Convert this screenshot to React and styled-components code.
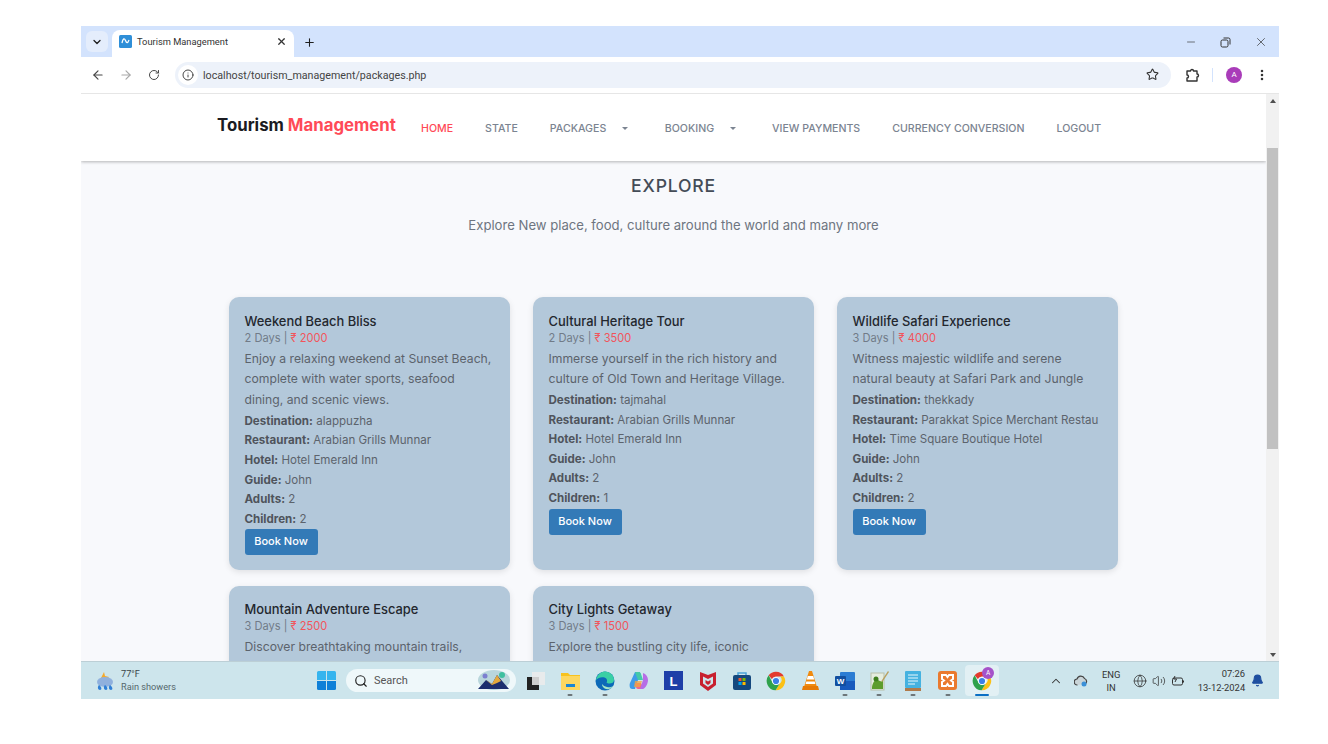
import React from "react";
import styled, { createGlobalStyle } from "styled-components";
import { ArrowLeft, ArrowRight, RotateCw, Info, Star, EllipsisVertical, ChevronDown, X, Plus, Minus, Search, ChevronUp, Globe, Volume2, Bell } from "lucide-react";

const Global = createGlobalStyle`
  html, body { margin: 0; padding: 0; background: #fff; overflow: hidden; }
  * { box-sizing: border-box; }
`;
const Stage = styled.div`
  width: 1328px; height: 744px; padding: 26px 49px 45px 81px; background: #fff;
  font-family: Roboto, "Liberation Sans", sans-serif;
`;
const Win = styled.div`
  width: 1198px; height: 673px; display: flex; flex-direction: column; overflow: hidden;
`;
const TabStrip = styled.div`
  height: 31px; flex: none; background: #d3e3fd; display: flex; align-items: flex-end; padding-left: 5px; color: #1f1f1f;
`;
const TabSearch = styled.div`
  width: 22px; height: 21px; margin: 0 4px 5px 0; border-radius: 6px; background: #e4edfc;
  display: flex; align-items: center; justify-content: center;
`;
const Tab = styled.div`
  width: 182px; height: 27px; background: #fff; border-radius: 8px 8px 0 0;
  display: flex; align-items: center; padding: 0 7px 4px; font-size: 9.3px; color: #333;
`;
const Favicon = styled.svg`width: 13px; height: 13px; margin-right: 5px; flex: none;`;
const TabTitle = styled.span`flex: 1;`;
const NewTab = styled.div`margin: 0 0 8px 9px; display: flex;`;
const WinControls = styled.div`
  margin: 0 11px 8px auto; display: flex; gap: 23px; align-items: center; color: #333;
`;
const Toolbar = styled.div`
  height: 37px; flex: none; background: #fff; display: flex; align-items: center; padding: 0 0 1px 3px;
  border-bottom: 1px solid #e6e6e6; color: #474747;
`;
const NavBtn = styled.div`
  width: 28px; display: flex; justify-content: center; color: ${p => p.$dim ? "#a8a8a8" : "#474747"};
`;
const Omnibox = styled.div`
  width: 996px; height: 26px; margin-left: 7px; border-radius: 13px; background: #edf2fa; display: flex; align-items: center;
  padding: 0 12px 0 3px; font-size: 10.7px; color: #1f1f1f;
`;
const InfoWrap = styled.div`
  width: 20px; height: 20px; border-radius: 50%; background: #fff; display: flex; align-items: center; justify-content: center; margin-right: 5px;
`;
const Url = styled.span`flex: 1; color: #444; padding-top: 1px;`;
const ToolRight = styled.div`display: flex; align-items: center; margin-left: 15px; color: #333;`;
const Divider = styled.div`width: 1px; height: 14px; background: #d3e3fd; margin: 0 13px 0 12px;`;
const Avatar = styled.div`
  width: 16px; height: 16px; border-radius: 50%; background: #a93cb9; color: #fff; font-size: 8px; display: flex; align-items: center; justify-content: center; margin-right: 13px;
`;
const Viewport = styled.div`flex: 1; min-height: 0; display: flex;`;
const Page = styled.div`
  width: 1185px; overflow: hidden; background: #f8f9fc;
  font-family: Inter, "Liberation Sans", sans-serif;
`;
const Scrollbar = styled.div`
  width: 13px; background: #f1f1f1; display: flex; flex-direction: column; align-items: center;
`;
const Arrow = styled.div`
  width: 0; height: 0; border-left: 3.5px solid transparent; border-right: 3.5px solid transparent;
  ${p => p.$up ? "border-bottom: 4px solid #505050; margin-top: 5px;" : "border-top: 4px solid #505050; margin-top: 204px;"}
`;
const Thumb = styled.div`width: 11px; height: 301px; background: #c1c1c1; margin-top: 45px;`;
const NavBar = styled.nav`
  height: 67px; background: #fff; box-shadow: 0 1px 3px rgba(0,0,0,.28); display: flex; align-items: center; padding-left: 136px; position: relative;
`;
const Logo = styled.div`
  width: 204px; font-size: 16.8px; font-weight: 700; color: #1b1b22; margin-top: -6px; white-space: nowrap;
  span { color: #ff4a57; }
`;
const NavLinks = styled.div`display: flex; align-items: center; gap: 32px; margin-top: 1px;`;
const NavLink = styled.a`
  font-size: 10.6px; font-weight: 500; color: ${p => p.$active ? "#ff4a57" : "#7b8491"}; white-space: nowrap; display: flex; align-items: center;
`;
const Caret = styled.i`
  display: inline-block; margin: 0 4.5px 0 ${p => p.$ml}px; width: 0; height: 0;
  border-left: 3px solid transparent; border-right: 3px solid transparent; border-top: 3px solid #7b8491;
`;
const Hero = styled.header`
  text-align: center; padding-top: 14px; height: 136px;
`;
const H1 = styled.h1`
  margin: 0; font-size: 17.6px; font-weight: 500; letter-spacing: 0.8px; color: #444c57; line-height: 22px;
`;
const Sub = styled.p`
  margin: 18px 0 0; font-size: 13.12px; color: #6e7580; line-height: 20px;
`;
const Grid = styled.div`
  width: 889px; margin: 0 auto; display: grid; grid-template-columns: repeat(3, 281px); column-gap: 23px; row-gap: 16px;
  grid-auto-rows: 272.6px;
`;
const Card = styled.article`
  background: #b3c8da; border-radius: 10px; box-shadow: 0 2px 6px rgba(0,0,0,.1); padding: 15.5px 15.5px;
  color: #5c626b;
`;
const Title = styled.h3`
  margin: 0; font-size: 12.9px; font-weight: 500; color: #23272e; line-height: 17px;
`;
const Meta = styled.div`
  font-size: 11.1px; color: #717b88; line-height: 16px; margin-bottom: 3px;
  b { font-weight: 400; color: #f2545b; }
`;
const Desc = styled.p`
  margin: 0 0 1px; font-size: 12.2px; line-height: 20.8px; color: #5c636c;
`;
const Detail = styled.div`
  font-size: 11.55px; line-height: 19.6px; color: #5c636c; white-space: nowrap;
  strong { font-weight: 700; color: #4f545c; }
`;
const BookBtn = styled.button`
  display: block; margin-top: 0; width: 73px; height: 26px; border: 0; border-radius: 3px; background: #337ab7; color: #fff;
  font: 500 11px Inter, "Liberation Sans", sans-serif; padding: 0 0 2px;
`;
const Taskbar = styled.footer`
  height: 38px; flex: none; background: #cde5ec; display: flex; align-items: center; border-top: 1px solid #bccfd6; color: #333;
`;
const Weather = styled.div`
  width: 230px; padding-left: 14px; display: flex; align-items: center; gap: 6px;
`;
const WeatherText = styled.div`
  font-size: 9.2px; line-height: 12.5px; color: #3a4446;
  div:last-child { color: #55686d; }
`;
const StartSlot = styled.div`width: 30px; display: flex; justify-content: center; margin-right: 5px;`;
const SearchBox = styled.div`
  width: 170px; height: 23px; border-radius: 12px; background: #eff8fa; display: flex; align-items: center; padding: 0 5px 0 8px; gap: 6px;
  font-size: 11px; color: #555; overflow: hidden;
`;
const SearchText = styled.span`flex: 1;`;
const Apps = styled.div`display: flex; margin-left: 3px;`;
const AppSlot = styled.div`
  width: 34.3px; height: 31px; display: flex; align-items: center; justify-content: center; position: relative; border-radius: 4px;
  background: ${p => p.$active ? "#e2f0f4" : "transparent"};
  &::after {
    content: ""; position: absolute; bottom: 0; left: 50%; transform: translateX(-50%); border-radius: 1px; height: 2px;
    width: ${p => p.$active ? 14 : 5}px;
    background: ${p => p.$active ? "#0a6fc4" : p.$running ? "#6d7679" : "transparent"};
  }
`;
const Tray = styled.div`display: flex; align-items: center; margin-left: 44.5px; color: #333;`;
const TrayItem = styled.div`display: flex; justify-content: center; width: ${p => p.$w}px;`;
const Lang = styled.div`
  width: 35px; text-align: center; font-size: 9.4px; line-height: 13px; color: #333; margin-right: 2px;
`;
const Clock = styled.div`
  width: 57.5px; text-align: right; font-size: 9.4px; line-height: 13.5px; color: #333;
`;

const Chrome = ({ s = 20 }) => (
  <svg width={s} height={s} viewBox="0 0 24 24">
    <path d="M12 1a11 11 0 0 1 9.5 5.5H12a5.5 5.5 0 0 0-5 3L3.2 5.2A11 11 0 0 1 12 1z" fill="#e33b2e" />
    <path d="M21.5 6.5A11 11 0 0 1 11.500 23l4.700-7.500a5.500 5.500 0 0 0 .6-9z" fill="#fbc116" />
    <path d="M3.200 5.200 7.800 14a5.500 5.500 0 0 0 8.400 1.500L11.500 23A11 11 0 0 1 3.200 5.200z" fill="#2fa24c" />
    <circle cx="12" cy="12" r="4.600" fill="#fff" /><circle cx="12" cy="12" r="3.700" fill="#3b7fe8" />
  </svg>
);
const appIcons = [
  { key: "task", node: <svg width="20" height="20" viewBox="0 0 20 20"><rect x="1" y="6" width="12" height="13" fill="#222" /><rect x="6" y="1" width="13" height="13" fill="#ececec" opacity=".85" /></svg> },
  { key: "files", running: 1, node: <svg width="21" height="20" viewBox="0 0 21 20"><path d="M1 2h7l2 2h10v15H1z" fill="#f7c21f" /><rect x="1" y="5" width="19" height="14" fill="#fdd760" /><rect x="6" y="13" width="9" height="3" fill="#1b86d4" /></svg> },
  { key: "edge", running: 1, node: <svg width="20" height="20" viewBox="0 0 20 20"><circle cx="10" cy="10" r="9.500" fill="#0c69b8" /><path d="M1 9C2 3 7 .5 10 .5c5 0 9 4 9 8.500 0 2.500-2 3.500-4.500 3.500-1.500 0-2.500-.5-3-1 1-1 1-4-2-5C6 5.500 3 7 1 9z" fill="#3ad0a5" /><path d="M7 13c0 3 3 6 7 5 2-.5 3-1.500 4-3-2 1.500-4 1.500-6 1-2-.5-4-1.500-5-3z" fill="#a4e6c8" /></svg> },
  { key: "copilot", node: <svg width="20" height="20" viewBox="0 0 20 20"><path d="M6 1h5l-2 8-3 9H3C1 18 0 15 1 12z" fill="#3f9be8" /><path d="M6 1h4c1 0 2 1 2 2l2 6H9L7 4z" fill="#44c9a8" /><path d="M14 18H9c-1 0-2-1-2-2l-1-4h6l1 2z" fill="#f0688c" /><path d="M14 2c3 1 5 4 5 7s-2 8-5 9h-3l3-9z" fill="#b66ee6" /><path d="M6 10h7l-2 6H5z" fill="#f6a63c" opacity=".75" /></svg> },
  { key: "l", node: <svg width="19" height="19" viewBox="0 0 19 19"><rect width="19" height="19" fill="#1e3fa8" /><text x="9.500" y="14.500" textAnchor="middle" fontSize="13" fontWeight="700" fill="#fff" fontFamily="Liberation Sans">L</text></svg> },
  { key: "mcafee", node: <svg width="18" height="20" viewBox="0 0 18 20"><path d="M1 1l8 3 8-3v13l-8 6-8-6z" fill="#c8202f" /><path d="M4 5.500 9 8l5-2.500v7L9 16l-5-3.500z" fill="#cde5ec" /><path d="M6.500 9 9 10.500 11.500 9v3L9 14l-2.500-2z" fill="#c8202f" /></svg> },
  { key: "store", node: <svg width="20" height="20" viewBox="0 0 20 20"><path d="M6 4V2h8v2" fill="none" stroke="#4ba3d8" strokeWidth="1.500" /><rect x="1" y="4" width="18" height="15" rx="2" fill="#14487e" /><rect x="6.500" y="7" width="3" height="3" fill="#f2542d" /><rect x="10.500" y="7" width="3" height="3" fill="#7eb900" /><rect x="6.500" y="11" width="3" height="3" fill="#00a3ee" /><rect x="10.500" y="11" width="3" height="3" fill="#ffb900" /></svg> },
  { key: "chrome", node: <Chrome /> },
  { key: "vlc", node: <svg width="17" height="20" viewBox="0 0 17 20"><path d="M7 0h3l5 16H2z" fill="#f08a0e" /><path d="M5.800 5h5.400l1 3.500H4.800zM4.300 10.500h8.400l.7 2.500H3.600z" fill="#fff" /><path d="M1 15h15l1 4H0z" fill="#e67a05" /></svg> },
  { key: "word", running: 1, node: <svg width="20" height="20" viewBox="0 0 20 20"><rect x="5" y="1" width="15" height="18" rx="1" fill="#2b7cd3" /><rect x="5" y="10" width="15" height="9" fill="#185abd" /><rect x="0" y="5" width="11" height="10" rx="1" fill="#124f9f" /><text x="5.500" y="13" textAnchor="middle" fontSize="8" fontWeight="700" fill="#fff" fontFamily="Liberation Sans">W</text></svg> },
  { key: "npp", running: 1, node: <svg width="20" height="21" viewBox="0 0 20 21"><rect x="2" y="3" width="13" height="17" fill="#e5ede0" stroke="#b7bfa9" /><path d="M3 17c1-6 4-8 6-7s3 2 5 1v8H3z" fill="#5d9c2c" /><circle cx="7" cy="9" r="2.500" fill="#3f7f1f" /><path d="M19 1l-6 9-1 2 2-1 6-9z" fill="#b9a15f" /></svg> },
  { key: "notes", running: 1, node: <svg width="16" height="21" viewBox="0 0 16 21"><rect y="1" width="16" height="17" rx="1" fill="#45b2e0" /><path d="M3 5h10M3 8h10M3 11h10M3 14h7" stroke="#e8f7fc" strokeWidth="1" /><rect y="18" width="16" height="3" fill="#b07a4a" /></svg> },
  { key: "xampp", running: 1, node: <svg width="19" height="19" viewBox="0 0 19 19"><rect width="19" height="19" rx="3" fill="#ea7a2e" /><path d="M4 4h4l1.500 2L11 4h4v4l-2 1.500 2 1.500v4h-4l-1.500-2L8 15H4v-4l2-1.500L4 8z" fill="none" stroke="#fff" strokeWidth="2" /></svg> },
];
const Badge = styled.div`
  position: absolute; top: 2px; right: 5px; width: 12px; height: 12px; border-radius: 50%; background: #a552c9; color: #fff; font-size: 6.5px; display: flex; align-items: center; justify-content: center;
`;

const packages = [
  { t: "Weekend Beach Bliss", d: "2 Days", p: "2000", desc: "Enjoy a relaxing weekend at Sunset Beach, complete with water sports, seafood dining, and scenic views.", dest: "alappuzha", r: "Arabian Grills Munnar", h: "Hotel Emerald Inn", g: "John", a: 2, c: 2 },
  { t: "Cultural Heritage Tour", d: "2 Days", p: "3500", desc: "Immerse yourself in the rich history and culture of Old Town and Heritage Village.", dest: "tajmahal", r: "Arabian Grills Munnar", h: "Hotel Emerald Inn", g: "John", a: 2, c: 1 },
  { t: "Wildlife Safari Experience", d: "3 Days", p: "4000", desc: "Witness majestic wildlife and serene natural beauty at Safari Park and Jungle", dest: "thekkady", r: "Parakkat Spice Merchant Restau", h: "Time Square Boutique Hotel", g: "John", a: 2, c: 2 },
  { t: "Mountain Adventure Escape", d: "3 Days", p: "2500", desc: "Discover breathtaking mountain trails," },
  { t: "City Lights Getaway", d: "3 Days", p: "1500", desc: "Explore the bustling city life, iconic" },
];

export default function App() {
  return (
    <Stage>
      <Global />
      <Win>
        <TabStrip>
          <TabSearch><ChevronDown size={12} strokeWidth={2.6} /></TabSearch>
          <Tab>
            <Favicon viewBox="0 0 13 13"><rect width="13" height="13" rx="1.500" fill="#2f8fd8" /><path d="M3 8c1-5 2.500-5 3.500-2.500S8.500 9 10 5" fill="none" stroke="#fff" strokeWidth="1.300" /></Favicon>
            <TabTitle>Tourism Management</TabTitle>
            <X size={11} strokeWidth={2.6} />
          </Tab>
          <NewTab><Plus size={13} strokeWidth={2} /></NewTab>
          <WinControls>
            <Minus size={12} strokeWidth={1.3} />
            <svg width="11" height="11" viewBox="0 0 11 11" fill="none" stroke="#333" strokeWidth="1"><rect x="1" y="3" width="7" height="7" rx="1.500" /><path d="M3.500 1H8.500a1.500 1.500 0 0 1 1.500 1.500V7.500" /></svg>
            <X size={14} strokeWidth={1.2} />
          </WinControls>
        </TabStrip>
        <Toolbar>
          <NavBtn><ArrowLeft size={14} strokeWidth={2} /></NavBtn>
          <NavBtn $dim><ArrowRight size={14} strokeWidth={2} /></NavBtn>
          <NavBtn><RotateCw size={12} strokeWidth={2} /></NavBtn>
          <Omnibox>
            <InfoWrap><Info size={12} strokeWidth={1.8} color="#333" /></InfoWrap>
            <Url>localhost/tourism_management/packages.php</Url>
            <Star size={13} strokeWidth={2} color="#333" />
          </Omnibox>
          <ToolRight>
            <svg width="14" height="14" viewBox="0 0 14 14" fill="none" stroke="#333" strokeWidth="1.400" strokeLinejoin="round"><path d="M1 3h3.500a1.500 1.500 0 0 1 3 0H11v3a1.500 1.500 0 0 1 0 3v4H1v-3a1.500 1.500 0 0 0 0-3z" /></svg>
            <Divider />
            <Avatar>A</Avatar>
            <EllipsisVertical size={14} strokeWidth={2.4} />
          </ToolRight>
        </Toolbar>
        <Viewport>
          <Page>
            <NavBar>
              <Logo>Tourism <span>Management</span></Logo>
              <NavLinks>
                <NavLink $active>HOME</NavLink>
                <NavLink>STATE</NavLink>
                <NavLink>PACKAGES<Caret $ml={16} /></NavLink>
                <NavLink>BOOKING<Caret $ml={15.5} /></NavLink>
                <NavLink>VIEW PAYMENTS</NavLink>
                <NavLink>CURRENCY CONVERSION</NavLink>
                <NavLink>LOGOUT</NavLink>
              </NavLinks>
            </NavBar>
            <Hero>
              <H1>EXPLORE</H1>
              <Sub>Explore New place, food, culture around the world and many more</Sub>
            </Hero>
            <Grid>
              {packages.map(k => (
                <Card key={k.t}>
                  <Title>{k.t}</Title>
                  <Meta>{k.d} | <b>₹ {k.p}</b></Meta>
                  <Desc>{k.desc}</Desc>
                  {k.dest && (
                    <>
                      <Detail><strong>Destination:</strong> {k.dest}</Detail>
                      <Detail><strong>Restaurant:</strong> {k.r}</Detail>
                      <Detail><strong>Hotel:</strong> {k.h}</Detail>
                      <Detail><strong>Guide:</strong> {k.g}</Detail>
                      <Detail><strong>Adults:</strong> {k.a}</Detail>
                      <Detail><strong>Children:</strong> {k.c}</Detail>
                      <BookBtn>Book Now</BookBtn>
                    </>
                  )}
                </Card>
              ))}
            </Grid>
          </Page>
          <Scrollbar>
            <Arrow $up />
            <Thumb />
            <Arrow />
          </Scrollbar>
        </Viewport>
        <Taskbar>
          <Weather>
            <svg width="20" height="20" viewBox="0 0 20 20"><path d="M9 1l1 4 4 1-3 3-5-2z" fill="#f6a92b" /><ellipse cx="10" cy="11" rx="8" ry="5" fill="#8fb0dd" /><path d="M4 14c-2 2-1 5 1 5s2-3-1-5zM10 14c-2 2-1 5 1 5s2-3-1-5zM15 14c-2 2-1 5 1 5s2-3-1-5z" fill="#2f7fd6" /></svg>
            <WeatherText><div>77°F</div><div>Rain showers</div></WeatherText>
          </Weather>
          <StartSlot>
            <svg width="19" height="19" viewBox="0 0 19 19"><path d="M0 1.500A1.500 1.500 0 0 1 1.500 0H9v9H0z" fill="#35b4ee" /><path d="M10 0h7.500A1.500 1.500 0 0 1 19 1.500V9h-9z" fill="#35b4ee" /><path d="M0 10h9v9H1.500A1.500 1.500 0 0 1 0 17.500z" fill="#0f80d8" /><path d="M10 10h9v7.500a1.500 1.500 0 0 1-1.500 1.500H10z" fill="#0f80d8" /></svg>
          </StartSlot>
          <SearchBox>
            <Search size={14} strokeWidth={2} color="#222" />
            <SearchText>Search</SearchText>
            <svg width="34" height="23" viewBox="0 0 34 23"><ellipse cx="17" cy="11" rx="16" ry="10" fill="#b9d6dc" /><path d="M1 20l8-9 6 4 5-9 12 14z" fill="#1c2e6e" /><path d="M9 11l6 4 5-9 4 6-4 2-5 2z" fill="#e5a93c" /><circle cx="8" cy="7" r="2.500" fill="#7c7fd0" /><circle cx="25" cy="6" r="3" fill="#3fc0a0" /></svg>
          </SearchBox>
          <Apps>
            {appIcons.map(a => <AppSlot key={a.key} $running={a.running}>{a.node}</AppSlot>)}
            <AppSlot $active><Chrome /><Badge>A</Badge></AppSlot>
          </Apps>
          <Tray>
            <TrayItem $w={25}><ChevronUp size={14} strokeWidth={1.8} /></TrayItem>
            <TrayItem $w={25}>
              <svg width="14" height="12" viewBox="0 0 14 12"><path d="M3.500 10A3 3 0 0 1 3 4a4 4 0 0 1 7.500-.5A3 3 0 0 1 11 9" fill="#c9d4d8" stroke="#444" strokeWidth="1.200" /><circle cx="10" cy="9" r="2.500" fill="#3b90d8" /></svg>
            </TrayItem>
            <Lang>ENG<br />IN</Lang>
            <TrayItem $w={19}><Globe size={14} strokeWidth={1.3} /></TrayItem>
            <TrayItem $w={19}><Volume2 size={14} strokeWidth={1.3} /></TrayItem>
            <TrayItem $w={19}>
              <svg width="14" height="12" viewBox="0 0 14 12" fill="none" stroke="#333" strokeWidth="1"><rect x="1.500" y="3" width="10" height="7" rx="1.500" /><path d="M12.500 5.500v2M4 1L2.500 4h3L4 7" /></svg>
            </TrayItem>
            <Clock>07:26<br />13-12-2024</Clock>
            <TrayItem $w={24}><Bell size={13} fill="#1f4fa0" color="#1f4fa0" /></TrayItem>
          </Tray>
        </Taskbar>
      </Win>
    </Stage>
  );
}
